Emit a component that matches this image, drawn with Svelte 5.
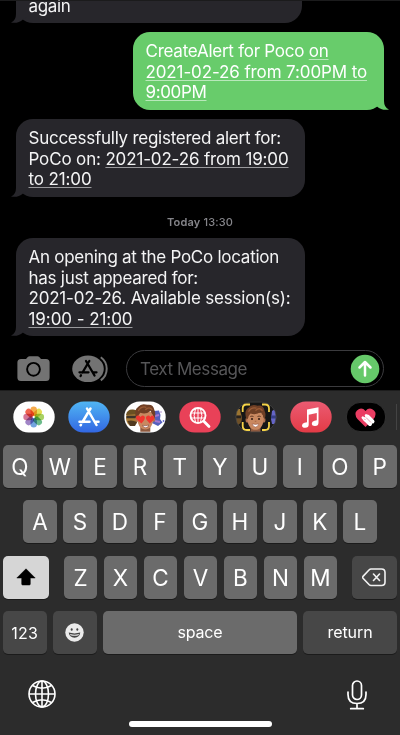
<script>
  const messages = [
    { side: 'in', cls: 'first', lines: [{ t: 'again', w: 42 }] },
    {
      side: 'out',
      cls: 'alert',
      lines: [
        { t: 'CreateAlert for Poco ', u: 'on', w: 183 },
        { u: '2021-02-26 from 7:00PM to', w: 221.5 },
        { u: '9:00PM', w: 61 }
      ]
    },
    {
      side: 'in',
      cls: 'registered',
      lines: [
        { t: 'Successfully registered alert for:', w: 252.5 },
        { t: 'PoCo on: ', u: '2021-02-26 from 19:00', w: 260 },
        { u: 'to 21:00', w: 63 }
      ]
    }
  ];
  const opening = {
    side: 'in',
    cls: 'opening',
    lines: [
      { t: 'An opening at the PoCo location', w: 250.5 },
      { t: 'has just appeared for:', w: 169.5 },
      { t: '2021-02-26. Available session(s):', w: 262 },
      { u: '19:00 - 21:00', w: 104 }
    ]
  };
  const petals = ['#f5a034', '#e3d83c', '#9ccb4c', '#58b27c', '#5e97db', '#9474c0', '#cf6489', '#ee5037'];

  // Tracks a line so that it spans the given width.
  function fit(node, width) {
    const apply = () => {
      node.style.letterSpacing = '0px';
      const natural = node.getBoundingClientRect().width;
      node.style.letterSpacing = (width - natural) / node.textContent.length + 'px';
    };
    apply();
    document.fonts?.ready.then(apply);
  }
</script>

{#snippet bubble(m)}
  <div class="bubble {m.side} {m.cls}">
    <svg class="tail" viewBox="0 0 16 18" width="16" height="18"><path d="M5 0V9Q5 15.500 0 17.500Q7 18.800 12 14.400L16 12V0Z" /></svg>
    {#each m.lines as l}
      <div class="line"><span use:fit={l.w}>{l.t ?? ''}{#if l.u}<u>{l.u}</u>{/if}</span></div>
    {/each}
  </div>
{/snippet}

{#snippet face()}
  <path d="M-5 9H5V15H-5Z" fill="#8f5a3f" />
  <ellipse cx="-8.300" cy="2.500" rx="1.700" ry="2.800" fill="#b0704e" />
  <ellipse cx="8.300" cy="2.500" rx="1.700" ry="2.800" fill="#b0704e" />
  <path d="M-8-5H8V3Q7 10 3 12Q0 13.200-3 12Q-7 10-8 3Z" fill="#c98860" />
  <path d="M-9 2Q-12-7-7-10Q-4-14 2-12Q8-13 9-7Q11-3 9 2L7.500-2Q6-3 5.500-6Q1-2-5-4Q-7-2-7.500 1Z" fill="#6f3f25" />
  <path d="M-7-6Q-4-11 1-9.500M0-7Q4-11 7-7" fill="none" stroke="#9b5c36" stroke-width="1.300" />
{/snippet}

<main>
  <section class="thread">
    {#each messages as m}{@render bubble(m)}{/each}
    <div class="stamp"><span use:fit={66}><b>Today</b> 13:30</span></div>
    {@render bubble(opening)}
  </section>

  <section class="compose">
    <svg class="camera" width="33" height="26" viewBox="0 0 33 26">
      <path fill="#737373" d="M4 3H9L11 .8Q11.600 .2 12.500 .2H20.500Q21.400 .2 22 .8L24 3H29Q32.600 3 32.600 6.500V21.500Q32.600 25 29 25H4Q.4 25 .4 21.500V6.500Q.4 3 4 3Z" />
      <circle cx="16.500" cy="13.300" r="6.400" fill="none" stroke="#000" stroke-width="1.900" />
    </svg>
    <svg class="apps" width="37" height="28" viewBox="0 0 37 28">
      <ellipse cx="16" cy="13.800" rx="15.800" ry="13.300" fill="#737373" />
      <path d="M28.800 2.200Q34.700 6.500 34.700 13.800T28.800 25.400" fill="none" stroke="#737373" stroke-width="2" />
      <g fill="none" stroke="#000" stroke-width="2.300" stroke-linecap="round">
        <path d="M17.300 6L10.500 17.500M14 6L22.500 20.500M7.500 17.300H16.500M21.500 17.300H24.500M9 20.300L8.600 21" />
      </g>
    </svg>
    <div class="field">
      <span use:fit={107}>Text Message</span>
      <svg width="30" height="30" viewBox="0 0 30 30">
        <circle cx="15" cy="15" r="14.300" fill="#66c96a" />
        <path d="M15 21.500V8.500M9.500 13.500L15 8L20.500 13.500" fill="none" stroke="#fff" stroke-width="2.500" stroke-linecap="round" stroke-linejoin="round" />
      </svg>
    </div>
  </section>

  <section class="panel">
    <div class="drawer">
      <svg class="app" viewBox="0 0 42 32">
        <rect x=".3" y=".6" width="41.400" height="30.800" rx="15.400" fill="#fff" />
        <g transform="translate(20.700 16)" class="petals">
          {#each petals as c, i}
            <rect x="-3.200" y="-10.400" width="6.400" height="9.400" rx="3.200" fill={c} opacity=".88" transform="rotate({i * 45})" />
          {/each}
        </g>
      </svg>
      <svg class="app" viewBox="0 0 42 32">
        <defs><linearGradient id="store" x2="0" y2="1"><stop stop-color="#50b5f3" /><stop offset="1" stop-color="#3267e3" /></linearGradient></defs>
        <rect x=".3" y=".6" width="41.400" height="30.800" rx="15.400" fill="url(#store)" />
        <path d="M22.500 7.500L14.500 21M19 7.500L28.500 24M11.500 20.700H21.500M27 20.700H30.500M13 23.700L12.600 24.300" fill="none" stroke="#fff" stroke-width="2.500" stroke-linecap="round" />
      </svg>
      <svg class="app" viewBox="0 0 42 32">
        <defs><clipPath id="pill"><rect x=".3" y=".6" width="41.400" height="30.800" rx="15.400" /></clipPath></defs>
        <g clip-path="url(#pill)">
          <rect width="42" height="32" fill="#fff" />
          <ellipse cx="8" cy="17" rx="6" ry="8" fill="#a87b36" />
          <path d="M2 14Q3 8 9 8.500T14 13Z" fill="#6b5022" />
          <path d="M2.500 16H13" stroke="#3c332a" stroke-width="2.600" />
          <path d="M3.500 20Q8 18.500 13 21L11 25H6Z" fill="#513a20" />
          <path d="M30 10L35 9.500L36.500 14L36 18L38.500 21.500L34 25L28 22Z" fill="#5560bd" />
          <path d="M31 15L35 14M31 20L36 21" stroke="#a578cf" stroke-width="2" />
          <circle cx="39.500" cy="20" r=".9" fill="#6a6acb" /><circle cx="37" cy="11" r=".7" fill="#936bc2" />
          <g transform="translate(21.300 15.800)">{@render face()}</g>
          <path d="M17.500 22.500L12.700 18.500Q10.700 15.500 13.500 14.500Q15.500 14 16.500 16Q18 13.500 20.200 15Q21.700 16.700 20.200 19ZM25.800 22.500L22.700 19Q21 16.500 23 15Q25 13.800 26.300 16Q28 13.800 29.700 15Q31.300 17 29.500 19Z" fill="#f0362f" />
          <path d="M18.500 24.300Q21.500 25.300 24.800 24Q24 27 21.300 26.700Q19.300 26.400 18.500 24.300Z" fill="#fff" stroke="#78372e" stroke-width=".5" />
        </g>
      </svg>
      <svg class="app" viewBox="0 0 42 32">
        <rect x=".3" y=".6" width="41.400" height="30.800" rx="15.400" fill="#e94158" />
        <g fill="none" stroke="#fff">
          <circle cx="19" cy="14.500" r="7.500" stroke-width="1.900" />
          <path d="M24.800 20.300L30 25.500" stroke-width="2.800" stroke-linecap="round" />
          <path d="M12 12H26M12 17H26M19 7V22M16.500 8Q13.700 14.500 16.500 21M21.500 8Q24.300 14.500 21.500 21" stroke-width="1" />
        </g>
      </svg>
      <svg class="app" viewBox="0 0 42 32">
        <defs><clipPath id="pill2"><rect x=".8" y="1.100" width="40.400" height="29.800" rx="14.900" /></clipPath></defs>
        <g clip-path="url(#pill2)">
          <rect width="42" height="32" fill="#171717" />
          <ellipse cx="2" cy="17" rx="5" ry="7" fill="#6e5028" />
          <path d="M0 8H5L6 14H0Z" fill="#9b7531" />
          <path d="M1 16H6" stroke="#2a231d" stroke-width="2.500" />
          <path d="M37 10L42 7V23H37L36 18Z" fill="#6565c7" />
          <path d="M36 16H42" stroke="#363e86" stroke-width="3" />
          <g transform="translate(20.500 16.500) scale(1 .98)">{@render face()}</g>
          <circle cx="17" cy="18" r="1.100" fill="#392016" /><circle cx="24" cy="18" r="1.100" fill="#392016" />
          <path d="M15.300 15.500Q17 14.700 18.500 15.500M22.500 15.500Q24.200 14.700 25.700 15.500" fill="none" stroke="#593321" stroke-width=".9" />
          <path d="M19.800 20.300H21.300" stroke="#a2623f" stroke-width=".9" />
          <path d="M17.300 22.800Q20.500 24 23.700 22.800Q23 26 20.500 26T17.300 22.800Z" fill="#fff" stroke="#8a4739" stroke-width=".5" />
        </g>
        <rect x=".8" y="1.100" width="40.400" height="29.800" rx="14.900" fill="none" stroke="#454545" stroke-width=".8" />
        <path d="M7.700 11V7.500Q7.700 3.500 11.700 3.500H15M27 3.500H30Q34 3.500 34 7.500V11M34 21V25Q34 29 30 29H27M15 29H11.700Q7.700 29 7.700 25V21" fill="none" stroke="#f5d348" stroke-width="1.800" />
      </svg>
      <svg class="app" viewBox="0 0 42 32">
        <defs><linearGradient id="music" x2="0" y2="1"><stop stop-color="#eb5b72" /><stop offset="1" stop-color="#e33b46" /></linearGradient></defs>
        <rect x=".3" y=".6" width="41.400" height="30.800" rx="15.400" fill="url(#music)" />
        <path fill="#fff" d="M17 8.500L28.500 6.200V21.500Q28.500 25 25 25Q21.800 25 21.800 22.500Q21.800 20.300 24.500 19.800L26.800 19.200V12L18.700 13.700V23.500Q18.700 26.800 15.200 26.800Q12 26.800 12 24.500Q12 22.200 14.500 21.700L17 21.200Z" />
      </svg>
      <svg class="app last-app" viewBox="0 0 42 32">
        <rect x="1.300" y="1.300" width="39.400" height="29.400" rx="14.700" fill="#000" stroke="#404040" stroke-width=".7" />
        <path d="M20.500 26L12.500 18Q8.500 13 12 9.500Q16.500 5.500 20.500 10Q24.500 5.500 29 9.500Q32.500 13 28.500 18Z" fill="#ea3d62" />
        <g stroke="#fff" stroke-linecap="round"><path d="M20 18L25 23M22.500 15.500L27.500 20.500" stroke-width="4" /><path d="M17.800 16.700L20 19M21 14.500L23 17" stroke-width="2.600" /></g>
        <path d="M21 16.500L26 21.500M19.300 17.800L20.500 19" stroke="#d45c76" stroke-width=".6" />
      </svg>
      <i class="divider"></i>
    </div>

    <div class="keys">
      <div class="row">{#each 'QWERTYUIOP' as k}<div class="key">{k}</div>{/each}</div>
      <div class="row middle">{#each 'ASDFGHJKL' as k}<div class="key">{k}</div>{/each}</div>
      <div class="row third">
        <div class="key shift">
          <svg width="20" height="18" viewBox="0 0 20 18"><path d="M10 .8L19.200 10H14.300V16Q14.300 17 13.300 17H6.700Q5.700 17 5.700 16V10H.8Z" fill="#000" stroke="#000" stroke-width=".5" stroke-linejoin="round" /></svg>
        </div>
        <div class="row letters">{#each 'ZXCVBNM' as k}<div class="key">{k}</div>{/each}</div>
        <div class="key dark delete">
          <svg width="24" height="19" viewBox="0 0 24 19" fill="none" stroke="#f2f2f2" stroke-width="1.600" stroke-linecap="round" stroke-linejoin="round"><path d="M9 1H19.500Q23 1 23 4.500V14Q23 17.500 19.500 17.500H9Q8 17.500 7 16.500L1 10.200Q.3 9.300 1 8.400L7 2Q8 1 9 1ZM11.500 6L17.500 12.500M17.500 6L11.500 12.500" /></svg>
        </div>
      </div>
      <div class="row last">
        <div class="key dark num"><span use:fit={27}>123</span></div>
        <div class="key dark emoji">
          <svg width="19" height="19" viewBox="0 0 19 19"><circle cx="9.500" cy="9.500" r="9.200" fill="#ececec" /><ellipse cx="6.700" cy="6.500" rx="1" ry="1.300" fill="#444" /><ellipse cx="12.300" cy="6.500" rx="1" ry="1.300" fill="#444" /><path d="M3.700 9.600Q9.500 11.200 15.300 9.600Q14.500 14.700 9.500 14.700T3.700 9.600Z" fill="#444" /><path d="M5 11Q9.500 12.300 14 11L13.500 12.200Q9.500 13.500 5.500 12.200Z" fill="#ececec" /></svg>
        </div>
        <div class="key space"><span use:fit={45}>space</span></div>
        <div class="key dark return"><span use:fit={45}>return</span></div>
      </div>
    </div>

    <div class="system">
      <svg width="28" height="28" viewBox="0 0 28 28" fill="none" stroke="#fff" stroke-width="1.600"><circle cx="14" cy="14" r="13" /><ellipse cx="14" cy="14" rx="6.500" ry="13" /><path d="M1 14H27M14 1V27M4.500 5.500Q14 11 23.500 5.500M4.500 22.500Q14 17 23.500 22.500" /></svg>
      <svg width="20" height="30" viewBox="0 0 20 30" fill="none" stroke="#fff" stroke-width="1.700" stroke-linecap="round"><rect x="5.500" y="1" width="9" height="18.500" rx="4.500" /><path d="M1 12V14.500Q1 23.500 10 23.500T19 14.500V12M10 23.500V28.500M3.700 28.700H16.300" /></svg>
    </div>
    <div class="home"></div>
  </section>
</main>

<style>
  :global(body) { background: #000; }
  main {
    width: 400px;
    height: 735px;
    overflow: hidden;
    display: flex;
    flex-direction: column;
    background: #000;
    color: #f4f4f5;
    font-family: Inter, 'Liberation Sans', sans-serif;
  }
  .thread {
    height: 345px;
    box-sizing: border-box;
    border-top: 1px solid #1b1b1c;
    display: flex;
    flex-direction: column;
    align-items: flex-start;
    flex: none;
  }
  .bubble {
    position: relative;
    box-sizing: border-box;
    width: 289px;
    padding: 9px 12.500px 0;
    border-radius: 17px;
    background: #27262b;
    flex: none;
  }
  .line {
    position: relative;
    height: 20.7px;
    line-height: 20.7px;
    font-size: 17px;
    white-space: nowrap;
  }
  .line span { display: inline-block; }
  u {
    text-decoration-color: #99999c;
    text-decoration-thickness: 1px;
    text-underline-offset: 2px;
    text-decoration-skip-ink: none;
  }
  .in { margin-left: 16px; }
  .out {
    align-self: flex-end;
    margin-right: 16px;
    background: #68cc6b;
    color: #fff;
  }
  .out u { text-decoration-color: #b8e8ba; }
  .first {
    width: 286px;
    height: 22px;
    padding-top: 0;
    border-top-left-radius: 0;
    border-top-right-radius: 0;
  }
  .first .line { margin-top: -5px; }
  .alert { width: 251px; height: 78px; margin-top: 9px; }
  .registered { height: 78px; margin-top: 9px; }
  .opening { height: 98px; }
  .tail {
    position: absolute;
    left: -5px;
    bottom: 0;
    fill: #27262b;
  }
  .out .tail {
    left: auto;
    right: -5px;
    transform: scaleX(-1);
    fill: #68cc6b;
  }
  .stamp {
    height: 41px;
    align-self: center;
    display: flex;
    align-items: center;
    padding-top: 8px;
    box-sizing: border-box;
    color: #85858a;
    font-size: 11px;
    font-weight: 500;
    white-space: nowrap;
  }
  .stamp b { font-weight: 600; }
  .compose {
    height: 45px;
    flex: none;
    box-sizing: border-box;
    padding: 5px 16px 0 17px;
    display: flex;
    align-items: flex-start;
  }
  .camera { margin: 6px 22px 0 0; }
  .apps { margin-top: 5px; }
  .field {
    margin-left: auto;
    width: 258px;
    height: 37px;
    box-sizing: border-box;
    border: 1px solid #3b3b3e;
    border-radius: 19px;
    padding: 0 3px 0 13px;
    display: flex;
    align-items: center;
    justify-content: space-between;
    color: #565658;
    font-size: 17px;
    white-space: nowrap;
  }
  .panel {
    flex: 1;
    background: #2c2c2c;
    box-shadow: inset 0 1px #1d1d1d;
  }
  .drawer {
    height: 55px;
    padding: 11px 0 0 12.500px;
    box-sizing: border-box;
    display: flex;
    gap: 13.500px;
  }
  .app { width: 42px; height: 32px; flex: none; }
  .last-app { margin-left: -.5px; }
  .petals rect { mix-blend-mode: multiply; }
  .divider { width: 1px; height: 26px; margin: 3px 0 0 -5px; background: #444; }
  .keys {
    padding: 0 3px;
    display: flex;
    flex-direction: column;
    gap: 12.300px;
  }
  .row { display: flex; gap: 6.100px; }
  .middle { padding-left: 20px; }
  .third { justify-content: space-between; gap: 0; }
  .key {
    width: 33.900px;
    height: 43.100px;
    box-sizing: border-box;
    border-radius: 5px;
    background: #6b6b6b;
    box-shadow: 0 1px #1b1b1b;
    display: flex;
    align-items: center;
    justify-content: center;
    color: #fff;
    font-size: 22.500px;
    flex: none;
  }
  .dark { background: #474747; }
  .shift { width: 46px; background: #d6d6d6; }
  .delete { width: 45px; }
  .last { gap: 6px; }
  .last .key { font-size: 16px; }
  .last .num { width: 43.500px; }
  .emoji { width: 44.500px; }
  .last .space { width: 194px; padding-bottom: 2px; }
  .last .return { width: 94px; padding-bottom: 2px; }
  .system {
    height: 67px;
    padding: 26px 33px 0 28px;
    box-sizing: border-box;
    display: flex;
    justify-content: space-between;
    align-items: flex-start;
  }
  .home {
    width: 143px;
    height: 6px;
    margin: 0 auto;
    border-radius: 3px;
    background: #fff;
  }
</style>
